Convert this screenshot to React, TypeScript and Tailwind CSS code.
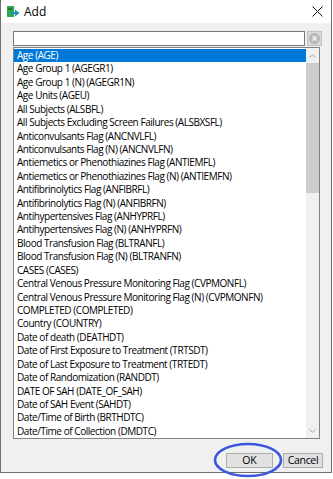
import React from 'react';

const items = [
  'Age (AGE)',
  'Age Group 1 (AGEGR1)',
  'Age Group 1 (N) (AGEGR1N)',
  'Age Units (AGEU)',
  'All Subjects (ALSBFL)',
  'All Subjects Excluding Screen Failures (ALSBXSFL)',
  'Anticonvulsants Flag (ANCNVLFL)',
  'Anticonvulsants Flag (N) (ANCNVLFN)',
  'Antiemetics or Phenothiazines Flag (ANTIEMFL)',
  'Antiemetics or Phenothiazines Flag (N) (ANTIEMFN)',
  'Antifibrinolytics Flag (ANFIBRFL)',
  'Antifibrinolytics Flag (N) (ANFIBRFN)',
  'Antihypertensives Flag (ANHYPRFL)',
  'Antihypertensives Flag (N) (ANHYPRFN)',
  'Blood Transfusion Flag (BLTRANFL)',
  'Blood Transfusion Flag (N) (BLTRANFN)',
  'CASES (CASES)',
  'Central Venous Pressure Monitoring Flag (CVPMONFL)',
  'Central Venous Pressure Monitoring Flag (N) (CVPMONFN)',
  'COMPLETED (COMPLETED)',
  'Country (COUNTRY)',
  'Date of death (DEATHDT)',
  'Date of First Exposure to Treatment (TRTSDT)',
  'Date of Last Exposure to Treatment (TRTEDT)',
  'Date of Randomization (RANDDT)',
  'DATE OF SAH (DATE_OF_SAH)',
  'Date of SAH Event (SAHDT)',
  'Date/Time of Birth (BRTHDTC)',
  'Date/Time of Collection (DMDTC)',
];

// icone disegnate a mano
function AddIcon() {
  return (
    <svg width="13" height="12" viewBox="0 0 13 12">
      <rect x="0" y="0" width="7" height="11" fill="#2fa84f" />
      <rect x="1" y="2" width="4" height="2" fill="#1b7a35" />
      <path d="M3 6 L8 6 L8 3.5 L12.5 7 L8 10.5 L8 8 L3 8 Z" fill="#1f8fb8" />
    </svg>
  );
}

function ClearIcon() {
  return (
    <svg width="11" height="11" viewBox="0 0 11 11">
      <circle cx="5.5" cy="5.5" r="4.8" fill="#bdbdbd" stroke="#a9a9a9" strokeWidth="1" />
      <path d="M3.5 3.5 L7.5 7.5 M7.5 3.5 L3.5 7.5" stroke="#f4f4f4" strokeWidth="1.3" />
    </svg>
  );
}

function Chevron({ up }: { up?: boolean }) {
  return (
    <svg width="7" height="4" viewBox="0 0 7 4">
      <path d={up ? 'M0.5 3.5 L3.5 0.8 L6.5 3.5' : 'M0.5 0.5 L3.5 3.2 L6.5 0.5'} fill="none" stroke="#a3a3a3" strokeWidth="1" />
    </svg>
  );
}

export default function App() {
  return (
    <div className="relative w-[333px] h-[479px] bg-white overflow-hidden" style={{ fontFamily: '"Open Sans", "Noto Sans", sans-serif' }}>
      <div className="w-[332px] h-[473px] flex flex-col border-l border-r border-b border-[#6f6f6f]">
        {/* barra del titolo */}
        <div className="h-[23px] bg-white flex items-center pl-[6px] pr-[6px]">
          <AddIcon />
          <span className="ml-[4px] text-[12px] text-black">Add</span>
          <svg className="ml-auto mr-[2px]" width="11" height="11" viewBox="0 0 11 11">
            <path d="M0.5 0.5 L10.5 10.5 M10.5 0.5 L0.5 10.5" stroke="#111" strokeWidth="1" />
          </svg>
        </div>

        <div className="flex-1 bg-[#f0f0f0] pl-[12px] pt-[8px] flex flex-col">
          <div className="flex items-center gap-[2px]">
            <div className="w-[292px] h-[15px] bg-white border border-[#7a7a7a]" />
            <div className="w-[15px] h-[15px] bg-[#d8d8d8] border border-[#c3c3c3] flex items-center justify-center">
              <ClearIcon />
            </div>
          </div>

          <div className="mt-[1px] w-[307px] h-[392px] bg-white border border-[#828282] flex">
            <div className="flex-1 pt-[1px]">
              {items.map((item, i) => (
                <div
                  key={item}
                  className={`h-[13.43px] leading-[13.43px] pl-[3px] text-[10px] tracking-[-0.45px] whitespace-nowrap ${i === 0 ? 'bg-[#0078d7] text-white' : 'text-black'}`}
                >
                  {item}
                </div>
              ))}
            </div>
            <div className="w-[13px] bg-[#f0f0f0] flex flex-col">
              <div className="h-[15px] flex items-center justify-center">
                <Chevron up />
              </div>
              <div className="h-[130px] bg-[#cdcdcd]" />
              <div className="flex-1" />
              <div className="h-[14px] flex items-center justify-center">
                <Chevron />
              </div>
            </div>
          </div>

          <div className="mt-[14px] flex gap-[10px] pl-[213px]">
            <button className="w-[47px] h-[15px] bg-[#e1e1e1] border border-[#adadad] text-[10.5px] leading-none text-black">OK</button>
            <button className="w-[40px] h-[15px] bg-[#e1e1e1] border border-[#adadad] text-[10.5px] tracking-[-0.3px] leading-none text-black">Cancel</button>
          </div>
        </div>
      </div>

      {/* annotazione: ellisse blu intorno a OK */}
      <svg className="absolute left-[212px] top-[441px]" width="72" height="38" viewBox="0 0 72 38">
        <ellipse cx="36" cy="19" rx="33" ry="16" fill="none" stroke="#3c57dc" strokeWidth="2.6" />
      </svg>
    </div>
  );
}
